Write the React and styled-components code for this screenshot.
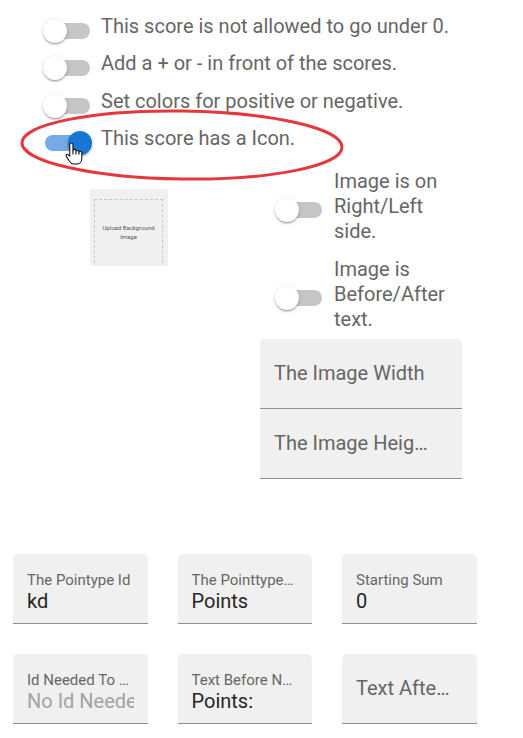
import styled, { createGlobalStyle } from "styled-components";

const GlobalStyle = createGlobalStyle`
  body {
    margin: 0;
    background: #fff;
    font-family: Roboto, "Liberation Sans", sans-serif;
  }
`;

const topToggles = [
  { label: "This score is not allowed to go under 0.", checked: false },
  { label: "Add a + or - in front of the scores.", checked: false },
  { label: "Set colors for positive or negative.", checked: false },
  { label: "This score has a Icon.", checked: true },
];

const bottomFields = [
  { label: "The Pointype Id", value: "kd" },
  { label: "The Pointtype Name", value: "Points" },
  { label: "Starting Sum", value: "0" },
  { label: "Id Needed To Show", value: "No Id Needed", muted: true },
  { label: "Text Before Number", value: "Points:" },
  { label: "Text After Number" },
];

function Switch({ checked }) {
  return (
    <SwitchRoot>
      <Track $checked={checked} />
      <Thumb $checked={checked} />
    </SwitchRoot>
  );
}

function Field({ label, value, muted, width }) {
  const hasValue = value !== undefined;
  return (
    <FieldBox $width={width} $filled={hasValue}>
      <FieldLabel $shrink={hasValue}>{label}</FieldLabel>
      {hasValue && <FieldValue $muted={muted}>{value}</FieldValue>}
    </FieldBox>
  );
}

function HandCursor() {
  return (
    <Cursor width="18" height="25" viewBox="0 0 17 23">
      <path
        d="M4.5 3a1.5 1.5 0 0 1 3 0V9a1.4 1.4 0 0 1 2.8 0v1a1.4 1.4 0 0 1 2.8 0v1a1.4 1.4 0 0 1 2.8 0v5c0 3-2 5.5-5 5.5H8.5c-2 0-3.2-1-4.2-2.5L1.2 14c-.6-1 .5-2.2 1.6-1.5L4.5 14Z"
        fill="#fff"
        stroke="#111"
        strokeWidth="1"
        strokeLinejoin="round"
      />
      <path d="M7.5 9v3.5M10.3 10v2.5M13.1 11v1.5" stroke="#111" strokeWidth="1" fill="none" />
    </Cursor>
  );
}

export default function App() {
  return (
    <Page>
      <GlobalStyle />
      <ToggleList>
        {topToggles.map((t) => (
          <ToggleRow key={t.label}>
            <Switch checked={t.checked} />
            <ToggleText>{t.label}</ToggleText>
          </ToggleRow>
        ))}
        <Annotation width="330" height="80" viewBox="0 0 330 80">
          <ellipse
            cx="163"
            cy="38"
            rx="160"
            ry="34"
            fill="none"
            stroke="#e5383d"
            strokeWidth="3"
            transform="rotate(0.8 163 38)"
          />
        </Annotation>
        <HandCursor />
      </ToggleList>

      <ImageSection>
        <UploadBox>
          <UploadInner>Upload Background Image</UploadInner>
        </UploadBox>
        <ImageColumn>
          <SideToggle>
            <Switch checked={false} />
            <SideText>Image is on Right/Left side.</SideText>
          </SideToggle>
          <SideToggle>
            <Switch checked={false} />
            <SideText>Image is Before/After text.</SideText>
          </SideToggle>
          <FieldStack>
            <Field label="The Image Width" width={202} />
            <Field label="The Image Height" width={202} />
          </FieldStack>
        </ImageColumn>
      </ImageSection>

      <FieldGrid>
        {bottomFields.map((f) => (
          <Field key={f.label} {...f} />
        ))}
      </FieldGrid>
    </Page>
  );
}

const Page = styled.div`
  width: 523px;
  min-height: 738px;
  padding-bottom: 14px;
`;

const ToggleList = styled.div`
  position: relative;
  display: flex;
  flex-direction: column;
  gap: 8.3px;
  padding: 14px 0 0 43px;
`;

const ToggleRow = styled.div`
  display: flex;
  align-items: flex-start;
  gap: 10px;
`;

const SwitchRoot = styled.span`
  position: relative;
  flex: none;
  width: 48px;
  height: 24px;
  margin-top: 5px;
`;

const Track = styled.span`
  position: absolute;
  left: 2px;
  right: 1px;
  top: 4px;
  height: 16px;
  border-radius: 8px;
  background: ${(p) => (p.$checked ? "#74aae5" : "#c6c6c6")};
`;

const Thumb = styled.span`
  position: absolute;
  top: 0;
  left: ${(p) => (p.$checked ? "25px" : "0")};
  width: 24px;
  height: 24px;
  border-radius: 50%;
  background: ${(p) => (p.$checked ? "#1976d2" : "#fff")};
  box-shadow: 0 2px 2px -1px rgba(0, 0, 0, 0.25), 0 1px 2px rgba(0, 0, 0, 0.16),
    0 1px 4px rgba(0, 0, 0, 0.12);
`;

const ToggleText = styled.span`
  font-size: 20px;
  line-height: 25px;
  color: #666;
  white-space: nowrap;
`;

const Annotation = styled.svg`
  position: absolute;
  left: 19px;
  top: 107px;
  pointer-events: none;
`;

const Cursor = styled.svg`
  position: absolute;
  left: 65px;
  top: 141px;
`;

const ImageSection = styled.div`
  display: flex;
  align-items: flex-start;
  margin-top: 14px;
`;

const UploadBox = styled.div`
  flex: none;
  width: 78px;
  height: 77px;
  margin: 20px 0 0 90px;
  background: #f0f0f0;
  overflow: hidden;
  padding: 10px 5px 0 4px;
  box-sizing: border-box;
`;

const UploadInner = styled.div`
  height: 90px;
  border: 1px dashed #c9c9c9;
  box-sizing: border-box;
  display: flex;
  justify-content: center;
  padding: 23px 6px 0;
  text-align: center;
  font-size: 6px;
  line-height: 9px;
  color: #555;
`;

const ImageColumn = styled.div`
  display: flex;
  flex-direction: column;
  margin-left: 92px;
`;

const SideToggle = styled.div`
  display: flex;
  align-items: center;
  gap: 11px;
  padding-left: 15px;
  margin-bottom: 13px;

  ${SwitchRoot} {
    margin-top: 8px;
  }
`;

const SideText = styled.span`
  width: 118px;
  font-size: 20px;
  line-height: 25px;
  color: #666;
`;

const FieldStack = styled.div`
  display: flex;
  flex-direction: column;
  margin-top: -6px;
`;

const FieldBox = styled.div`
  width: ${(p) => (p.$width ? `${p.$width}px` : "auto")};
  height: 70px;
  box-sizing: border-box;
  padding: 0 14px;
  background: #f0f0f0;
  border-radius: 5px 5px 0 0;
  border-bottom: 1px solid #8f8f8f;
  display: flex;
  flex-direction: column;
  justify-content: ${(p) => (p.$filled ? "flex-start" : "center")};
  overflow: hidden;
`;

const FieldLabel = styled.div`
  color: #666;
  white-space: nowrap;
  overflow: hidden;
  text-overflow: ellipsis;
  font-size: ${(p) => (p.$shrink ? "15px" : "20px")};
  line-height: ${(p) => (p.$shrink ? "18px" : "24px")};
  padding-top: ${(p) => (p.$shrink ? "17px" : "0")};
  max-width: ${(p) => (p.$shrink ? "calc(100% - 3px)" : "calc(100% - 20px)")};
`;

const FieldValue = styled.div`
  font-size: 20px;
  line-height: 24px;
  color: ${(p) => (p.$muted ? "#a3a3a3" : "#262626")};
  white-space: nowrap;
  overflow: hidden;
`;

const FieldGrid = styled.div`
  display: grid;
  grid-template-columns: repeat(3, 134.5px);
  column-gap: 30px;
  row-gap: 30px;
  margin: 75px 0 0 13px;

  ${FieldLabel}:only-child {
    max-width: calc(100% - 10px);
  }
`;
